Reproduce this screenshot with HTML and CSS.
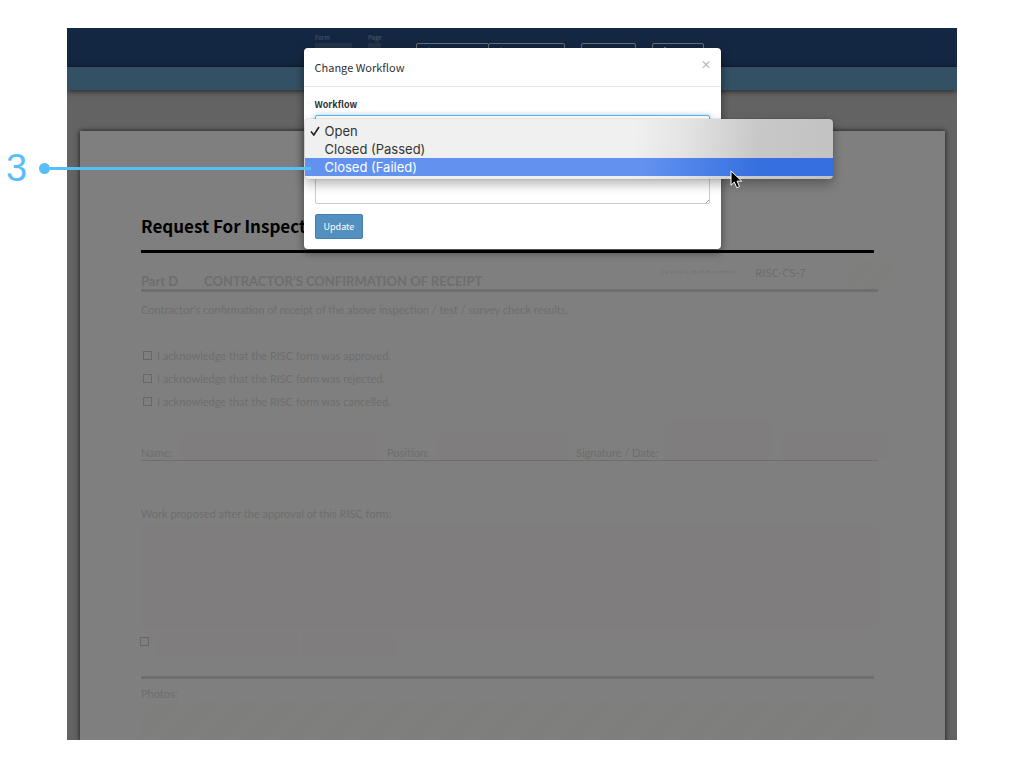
FILE: index.html
```html
<!DOCTYPE html>
<html lang="en">
<head>
  <meta charset="UTF-8">
  <meta name="viewport" content="width=device-width, initial-scale=1.0">
  <title>Change Workflow</title>
  <link rel="stylesheet" href="styles.css">
</head>
<body>

<div class="app">
  <header class="topbar">
    <div class="picker picker-form">
      <label for="form-no">Form</label>
      <input type="text" id="form-no">
    </div>
    <div class="picker picker-page">
      <label for="page-no">Page</label>
      <input type="text" id="page-no">
    </div>
    <div class="btn-group">
      <button type="button" class="tool-btn" aria-label="Zoom out">
        <svg width="8" height="8" viewBox="0 0 8 8"><circle cx="4" cy="4" r="3"/></svg>
      </button>
      <button type="button" class="tool-btn" aria-label="Zoom in">
        <svg width="8" height="8" viewBox="0 0 8 8"><circle cx="4" cy="4" r="3"/></svg>
      </button>
    </div>
    <button type="button" class="tool-btn single" aria-label="Save"></button>
    <button type="button" class="tool-btn small" aria-label="Print">
      <svg width="8" height="8" viewBox="0 0 8 8"><path d="M4 0v8M1 3l3-3 3 3"/></svg>
    </button>
  </header>
  <div class="subbar"></div>

  <main class="paper">
    <h1 class="paper-title">Request For Inspect</h1>

    <section class="part">
      <div class="part-head">
        <h2>Part D</h2>
        <h2 class="part-name">CONTRACTOR’S CONFIRMATION OF RECEIPT</h2>
        <span class="site">Car Park 4, Multi-Functionali</span>
        <span class="form-ref">RISC-CS-7</span>
        <span class="ref-box"></span>
      </div>
      <p class="intro">Contractor's confirmation of receipt of the above inspection / test / survey check results.</p>

      <div class="checks">
        <label><input type="checkbox"> I acknowledge that the RISC form was approved.</label>
        <label><input type="checkbox"> I acknowledge that the RISC form was rejected.</label>
        <label><input type="checkbox"> I acknowledge that the RISC form was cancelled.</label>
      </div>

      <div class="sign-row">
        <div class="sign-cell cell-name">
          <label for="name">Name:</label>
          <input type="text" id="name" class="field">
        </div>
        <div class="sign-cell cell-position">
          <label for="position">Position:</label>
          <input type="text" id="position" class="field">
        </div>
        <div class="sign-cell cell-sign">
          <label for="signature">Signature / Date:</label>
          <input type="text" id="signature" class="field tall">
          <input type="text" class="field date" aria-label="Date">
        </div>
      </div>

      <label class="work-label" for="work">Work proposed after the approval of this RISC form:</label>
      <textarea id="work" class="field work"></textarea>

      <div class="extra-row">
        <input type="checkbox" aria-label="Other">
        <input type="text" class="field extra-wide" aria-label="Other details">
        <input type="text" class="field extra-narrow" aria-label="Other date">
      </div>
    </section>

    <section class="photos">
      <h3>Photos:</h3>
      <div class="photo-area"></div>
    </section>
  </main>

  <div class="backdrop"></div>

  <div class="modal" role="dialog" aria-labelledby="modal-title">
    <div class="modal-header">
      <h4 id="modal-title">Change Workflow</h4>
      <button type="button" class="close-btn" aria-label="Close">&times;</button>
    </div>
    <form class="modal-body">
      <label for="workflow">Workflow</label>
      <div class="select-wrap">
        <select id="workflow" class="control">
          <option>Open</option>
          <option>Closed (Passed)</option>
          <option>Closed (Failed)</option>
        </select>
        <ul class="menu" role="listbox" aria-label="Workflow">
          <li role="option" aria-selected="true">
            <svg class="tick" width="10" height="10" viewBox="0 0 10 10"><path d="M1 5.6L3.8 9 9 1"/></svg>
            Open
          </li>
          <li role="option" aria-selected="false">Closed (Passed)</li>
          <li role="option" aria-selected="false" class="active">Closed (Failed)</li>
        </ul>
        <svg class="cursor" width="14" height="20" viewBox="0 0 14 20"><path d="M1 1v14.2l3.3-3.1 2.4 5.6 2.8-1.2-2.4-5.4h4.6z"/></svg>
      </div>
      <textarea class="control remark" aria-label="Remark"></textarea>
      <button type="button" class="update-btn">Update</button>
    </form>
  </div>
</div>

<div class="callout">
  <span class="callout-no">3</span>
  <span class="callout-dot"></span>
  <span class="callout-line"></span>
</div>

</body>
</html>
```

FILE: styles.css
```css
* {
  box-sizing: border-box;
  margin: 0;
  padding: 0;
}

body {
  position: relative;
  padding: 28px 67px;
  background-color: #fff;
  color: #333;
  font-family: "Noto Sans CJK SC", "Noto Sans", sans-serif;
  font-size: 11px;
}

input, textarea, select, button {
  font: inherit;
  border: none;
  background: none;
  appearance: none;
}

.app {
  position: relative;
  height: calc(100vh - 56px);
  overflow: hidden;
  background-color: #c6c6c6;
}

/* top bars */
.topbar {
  display: flex;
  align-items: flex-start;
  height: 39px;
  padding: 5px 0 0 248px;
  background-color: #284e84;
  overflow: hidden;
}

.picker label {
  display: block;
  height: 10px;
  font-size: 6px;
  line-height: 10px;
  color: #a0acc4;
}

.picker input {
  display: block;
  width: 100%;
  height: 20px;
  background-color: #4a6894;
}

.picker-form {
  width: 37px;
  margin-right: 16px;
}

.picker-page {
  width: 13px;
  margin-right: 35px;
}

.btn-group {
  display: flex;
  margin-right: 16px;
}

.tool-btn {
  display: flex;
  width: 73px;
  height: 22px;
  margin-top: 10px;
  padding: 3px 8px;
  border: 1px solid #d5dbe6;
  border-radius: 2px;
}

.btn-group .tool-btn + .tool-btn {
  width: 77px;
  margin-left: -1px;
}

.tool-btn.single {
  width: 55px;
  margin-right: 16px;
}

.tool-btn.small {
  width: 52px;
}

.tool-btn svg {
  fill: none;
  stroke: #d5dbe6;
}

.subbar {
  position: relative;
  height: 23px;
  background-color: #66a0c8;
  box-shadow: 0 1px 6px rgba(0, 0, 0, 0.7);
}

/* paper form */
.paper {
  margin: 41px 12px 0 13px;
  padding: 81px 67px 0 61px;
  background-color: #fff;
  box-shadow: 0 0 5px rgba(0, 0, 0, 0.8);
  color: #dcdcdc;
  font-family: Lato, "Noto Sans", sans-serif;
  font-size: 11px;
}

.paper-title {
  height: 41px;
  margin-right: 4px;
  border-bottom: 3px solid #000;
  color: #000;
  font-family: "Noto Sans CJK SC", "Noto Sans", sans-serif;
  font-size: 17px;
  line-height: 28px;
}

.part-head {
  display: flex;
  align-items: flex-end;
  height: 39px;
  border-bottom: 3px solid #dcdcdc;
}

.part-head h2 {
  width: 63px;
  font-size: 13px;
  line-height: 16px;
}

.part-head .part-name {
  flex: 1;
  width: auto;
  white-space: nowrap;
}

.site {
  width: 95px;
  font-size: 6px;
  line-height: 34px;
  color: #e4e6ec;
}

.form-ref {
  width: 92px;
  font-family: "Noto Sans CJK SC", "Noto Sans", sans-serif;
  font-size: 11px;
  line-height: 34px;
  color: #d8dade;
}

.ref-box {
  width: 45px;
  height: 28px;
  margin-right: -14px;
  background: repeating-linear-gradient(135deg, #fffffd 0 10px, #fdfdfa 10px 20px);
}

.intro {
  margin-top: 8px;
  line-height: 20px;
}

.checks {
  margin-top: 24px;
}

.checks label {
  display: flex;
  align-items: center;
  gap: 5px;
  height: 23px;
}

.paper input[type="checkbox"] {
  width: 9px;
  height: 9px;
  margin-left: 2px;
  border: 1px solid #d6cccc;
}

.sign-row {
  display: flex;
  align-items: flex-end;
  height: 41px;
  margin-top: 7px;
  border-bottom: 1px solid #dcdcdc;
}

.sign-cell {
  display: flex;
  align-items: flex-end;
  gap: 8px;
  min-width: 0;
}

.sign-cell label {
  line-height: 14px;
  white-space: nowrap;
}

.cell-name {
  flex: 246;
}

.cell-position {
  flex: 189;
}

.cell-sign {
  flex: 302;
}

.field {
  display: block;
  flex: 1;
  min-width: 0;
  height: 26px;
  background-color: #fffbfa;
}

.cell-name .field,
.cell-position .field {
  margin-right: 10px;
}

.field.tall {
  height: 40px;
}

.field.date {
  margin-right: -9px;
}

.work-label {
  display: block;
  margin-top: 43px;
  line-height: 20px;
}

.work {
  width: 100%;
  height: 105px;
  resize: none;
}

.extra-row {
  display: flex;
  align-items: center;
  gap: 4px;
  height: 22px;
  margin-top: 5px;
}

.extra-row input[type="checkbox"] {
  margin: 0 3px 8px -1px;
}

.extra-row .field {
  flex: none;
  height: 22px;
}

.extra-wide {
  width: 142px;
}

.extra-narrow {
  width: 94px;
}

.photos {
  margin: 20px 4px 0 0;
  padding-top: 8px;
  border-top: 3px solid #dcdcdc;
}

.photos h3 {
  font-size: 11px;
  font-weight: normal;
  line-height: 14px;
}

.photo-area {
  height: 120px;
  background: repeating-linear-gradient(135deg, #fffffd 0 14px, #fcfcf8 14px 28px);
}

/* modal */
.backdrop {
  position: absolute;
  inset: 0;
  background-color: rgba(0, 0, 0, 0.5);
}

.modal {
  position: absolute;
  top: 20px;
  left: 0;
  right: 0;
  width: 417px;
  margin: 0 auto;
  border-radius: 4px;
  background-color: #fff;
  box-shadow: 0 3px 9px rgba(0, 0, 0, 0.5);
}

.modal-header {
  display: flex;
  justify-content: space-between;
  height: 39px;
  padding: 0 11px;
  border-bottom: 1px solid #e8e8e8;
}

.modal-header h4 {
  font-size: 11px;
  font-weight: normal;
  line-height: 39px;
}

.close-btn {
  margin-right: -2px;
  height: 32px;
  font-size: 11px;
  font-weight: bold;
  line-height: 32px;
  color: #bbb;
}

.modal-body {
  display: flex;
  flex-direction: column;
  align-items: flex-start;
  padding: 10px 11px;
}

.modal-body label {
  font-size: 9px;
  font-weight: bold;
  line-height: 16px;
}

.select-wrap {
  position: relative;
  width: 100%;
  margin-top: 2px;
}

.control {
  display: block;
  width: 100%;
  height: 24px;
  border: 1px solid #ccc;
  border-radius: 2px;
  background-color: #fff;
}

select.control {
  border-color: #66afe9;
  box-shadow: 0 0 5px rgba(102, 175, 233, 0.6);
}

.remark {
  height: 56px;
  margin: 9px 0 10px;
  background: linear-gradient(135deg, transparent 60%, #999 60% 75%, transparent 75%) right bottom / 5px 5px no-repeat;
  resize: none;
}

.update-btn {
  height: 25px;
  padding: 0 8px;
  border: 1px solid #4380b0;
  border-radius: 2px;
  background-color: #5390bf;
  color: #fff;
  font-size: 9px;
}

/* open drop-down */
.menu {
  position: absolute;
  z-index: 2;
  top: 4px;
  left: -10px;
  width: 528px;
  padding: 3px 0;
  border-radius: 4px;
  background: linear-gradient(95deg, #f0f0f0 62%, #e3e3e3 72%, #c8c8c8 85%, #c2c2c2);
  box-shadow: 0 5px 12px rgba(0, 0, 0, 0.3), 0 0 1px rgba(0, 0, 0, 0.5);
  color: #333;
  font-family: Inter, "Liberation Sans", sans-serif;
  font-size: 13px;
  line-height: 18px;
  list-style: none;
}

.menu li {
  position: relative;
  padding-left: 20px;
}

.menu .active {
  background: linear-gradient(95deg, #6292f0 64%, #366fdf 86%);
  color: #fff;
}

.tick {
  position: absolute;
  top: 4px;
  left: 5px;
  fill: none;
  stroke: #222;
  stroke-width: 1.6;
}

.cursor {
  position: absolute;
  z-index: 3;
  top: 55px;
  left: 415px;
  fill: #000;
  stroke: #fff;
}

/* step marker */
.callout {
  position: absolute;
  z-index: 5;
  top: 148px;
  left: 6px;
  display: flex;
  align-items: center;
  width: 305px;
  height: 40px;
  color: #58befa;
}

.callout-no {
  width: 33px;
  font-family: "Liberation Sans", sans-serif;
  font-size: 38px;
  line-height: 40px;
}

.callout-dot {
  width: 11px;
  height: 11px;
  border-radius: 50%;
  background-color: #58befa;
}

.callout-line {
  flex: 1;
  height: 3px;
  background-color: #58befa;
}
```
